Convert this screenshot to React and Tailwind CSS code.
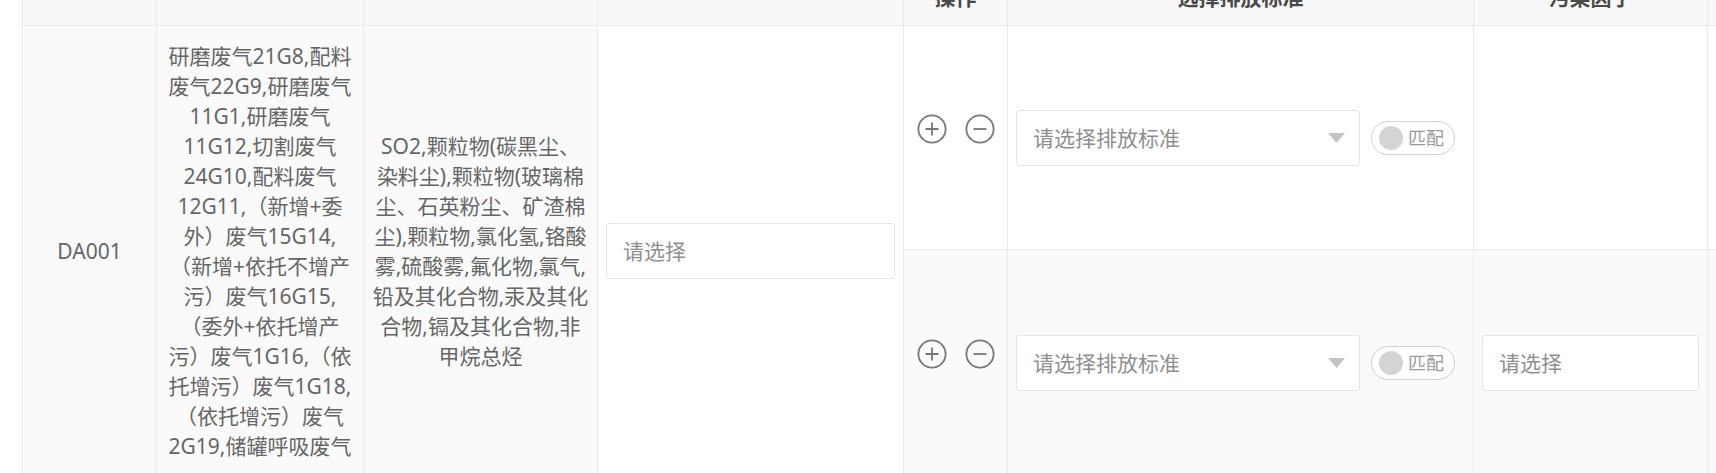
import React from 'react';

const font = { fontFamily: '"Noto Sans", "Noto Sans CJK SC", sans-serif' };

const outlets = [
  '研磨废气21G8,配料',
  '废气22G9,研磨废气',
  '11G1,研磨废气',
  '11G12,切割废气',
  '24G10,配料废气',
  '12G11,（新增+委',
  '外）废气15G14,',
  '（新增+依托不增产',
  '污）废气16G15,',
  '（委外+依托增产',
  '污）废气1G16,（依',
  '托增污）废气1G18,',
  '（依托增污）废气',
  '2G19,储罐呼吸废气',
];

const pollutants = [
  'SO2,颗粒物(碳黑尘、',
  '染料尘),颗粒物(玻璃棉',
  '尘、石英粉尘、矿渣棉',
  '尘),颗粒物,氯化氢,铬酸',
  '雾,硫酸雾,氟化物,氯气,',
  '铅及其化合物,汞及其化',
  '合物,镉及其化合物,非',
  '甲烷总烃',
];

function CircleBtn({ minus }) {
  return (
    <svg width="30" height="30" viewBox="0 0 30 30" fill="none" stroke="#777" strokeWidth="1.8">
      <circle cx="15" cy="15" r="13.6" />
      <path d={minus ? 'M8.5 15h13' : 'M8.5 15h13M15 8.5v13'} />
    </svg>
  );
}

function Input({ width, text }) {
  return (
    <div className={`flex h-[56px] items-center rounded-[3px] border border-[#e6e6e6] bg-white pl-[16px] text-[#8f8f8f] ${width}`}>
      {text}
    </div>
  );
}

function StandardRow({ bg }) {
  return (
    <>
      <div className={`flex items-center justify-center gap-[18px] border-r border-b border-[#ebebeb] pb-[18px] ${bg}`}>
        <CircleBtn />
        <CircleBtn minus />
      </div>
      <div className={`flex items-center gap-[11px] border-r border-b border-[#ebebeb] pl-[8px] ${bg}`}>
        <div className="flex h-[56px] w-[344px] items-center justify-between rounded-[3px] border border-[#e6e6e6] bg-white pl-[16px] pr-[14px] text-[#8f8f8f]">
          <span>请选择排放标准</span>
          <svg width="17" height="10" viewBox="0 0 17 10">
            <path d="M0 0h17L8.5 10z" fill="#c4c4c4" />
          </svg>
        </div>
        <div className="flex h-[34px] w-[84px] items-center gap-[5px] rounded-full border border-[#d2d2d2] bg-white pl-[7px]">
          <div className="h-[24px] w-[24px] rounded-full bg-[#d4d4d4]" />
          <span className="text-[18px] text-[#999]">匹配</span>
        </div>
      </div>
      <div className={`flex items-center border-r border-b border-[#ebebeb] px-[8px] ${bg}`}>
        {bg !== 'bg-white' && <Input width="w-[217px]" text="请选择" />}
      </div>
      <div className={`border-b border-[#ebebeb] ${bg}`} />
    </>
  );
}

export default function App() {
  const cols = 'grid grid-cols-[134px_207px_234px_306px_104px_466px_234px_1fr]';

  return (
    <div className="h-[473px] w-full overflow-hidden bg-white pl-[22px] text-[21px] leading-[30px] text-[#666]" style={font}>
      <div className="-mt-[32px] border-l border-[#ebebeb]">
        {/* header, its top runs off the page */}
        <div className={`${cols} h-[58px] border-b border-[#ebebeb] bg-[#f8f8f8] font-bold text-[#4a4a4a]`}>
          <div className="border-r border-[#ebebeb]" />
          <div className="border-r border-[#ebebeb]" />
          <div className="border-r border-[#ebebeb]" />
          <div className="border-r border-[#ebebeb]" />
          <div className="flex items-center justify-center border-r border-[#ebebeb]">操作</div>
          <div className="flex items-center justify-center border-r border-[#ebebeb]">选择排放标准</div>
          <div className="flex items-center justify-center border-r border-[#ebebeb]">污染因子</div>
          <div />
        </div>

        {/* body */}
        <div className={`${cols} grid-rows-[224px_226px]`}>
          <div className="row-span-2 flex items-center justify-center border-r border-b border-[#ebebeb] bg-[#fafafa]">
            DA001
          </div>
          <div className="row-span-2 flex flex-col items-center justify-center border-r border-b border-[#ebebeb] bg-[#fafafa]">
            {outlets.map((l) => (
              <div key={l} className="whitespace-nowrap">{l}</div>
            ))}
          </div>
          <div className="row-span-2 flex flex-col items-center justify-center border-r border-b border-[#ebebeb] bg-[#fafafa]">
            {pollutants.map((l) => (
              <div key={l} className="whitespace-nowrap">{l}</div>
            ))}
          </div>
          <div className="row-span-2 flex items-center border-r border-b border-[#ebebeb] bg-white px-[8px]">
            <Input width="w-full" text="请选择" />
          </div>
          <StandardRow bg="bg-white" />
          <StandardRow bg="bg-[#fafafa]" />
        </div>
      </div>
    </div>
  );
}
